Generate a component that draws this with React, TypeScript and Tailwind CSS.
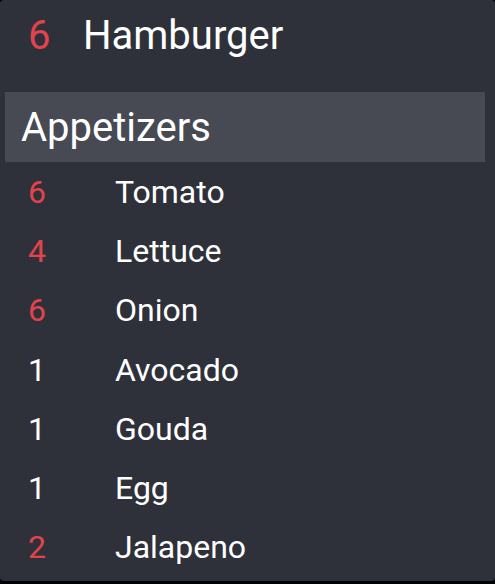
import React from "react";

const items: { n: number; name: string; red: boolean }[] = [
  { n: 6, name: "Tomato", red: true },
  { n: 4, name: "Lettuce", red: true },
  { n: 6, name: "Onion", red: true },
  { n: 1, name: "Avocado", red: false },
  { n: 1, name: "Gouda", red: false },
  { n: 1, name: "Egg", red: false },
  { n: 2, name: "Jalapeno", red: true },
];

export default function App() {
  return (
    <div className="w-[495px] h-[584px] bg-black" style={{ fontFamily: "Roboto, 'Noto Sans', sans-serif" }}>
      <div className="w-full h-[581px] bg-[#2f313a] rounded-[4px] overflow-hidden text-white">
        <div className="h-[92px] pt-[12px] pl-[28px] flex text-[40px] leading-[48px]">
          <span className="w-[55px] text-[#e2434c]">6</span>
          <span>Hamburger</span>
        </div>
        <div className="mx-[5px] w-[480px] h-[70px] bg-[#474a53] pt-[12px] pl-[16px] text-[40px] leading-[48px]">
          Appetizers
        </div>
        <div className="pt-[1px]">
          {items.map((it) => (
            <div key={it.name} className="flex pl-[28px] text-[32px] leading-[59.2px] h-[59.2px]">
              <span className={"w-[87px] " + (it.red ? "text-[#e2434c]" : "text-white")}>{it.n}</span>
              <span>{it.name}</span>
            </div>
          ))}
        </div>
      </div>
    </div>
  );
}
